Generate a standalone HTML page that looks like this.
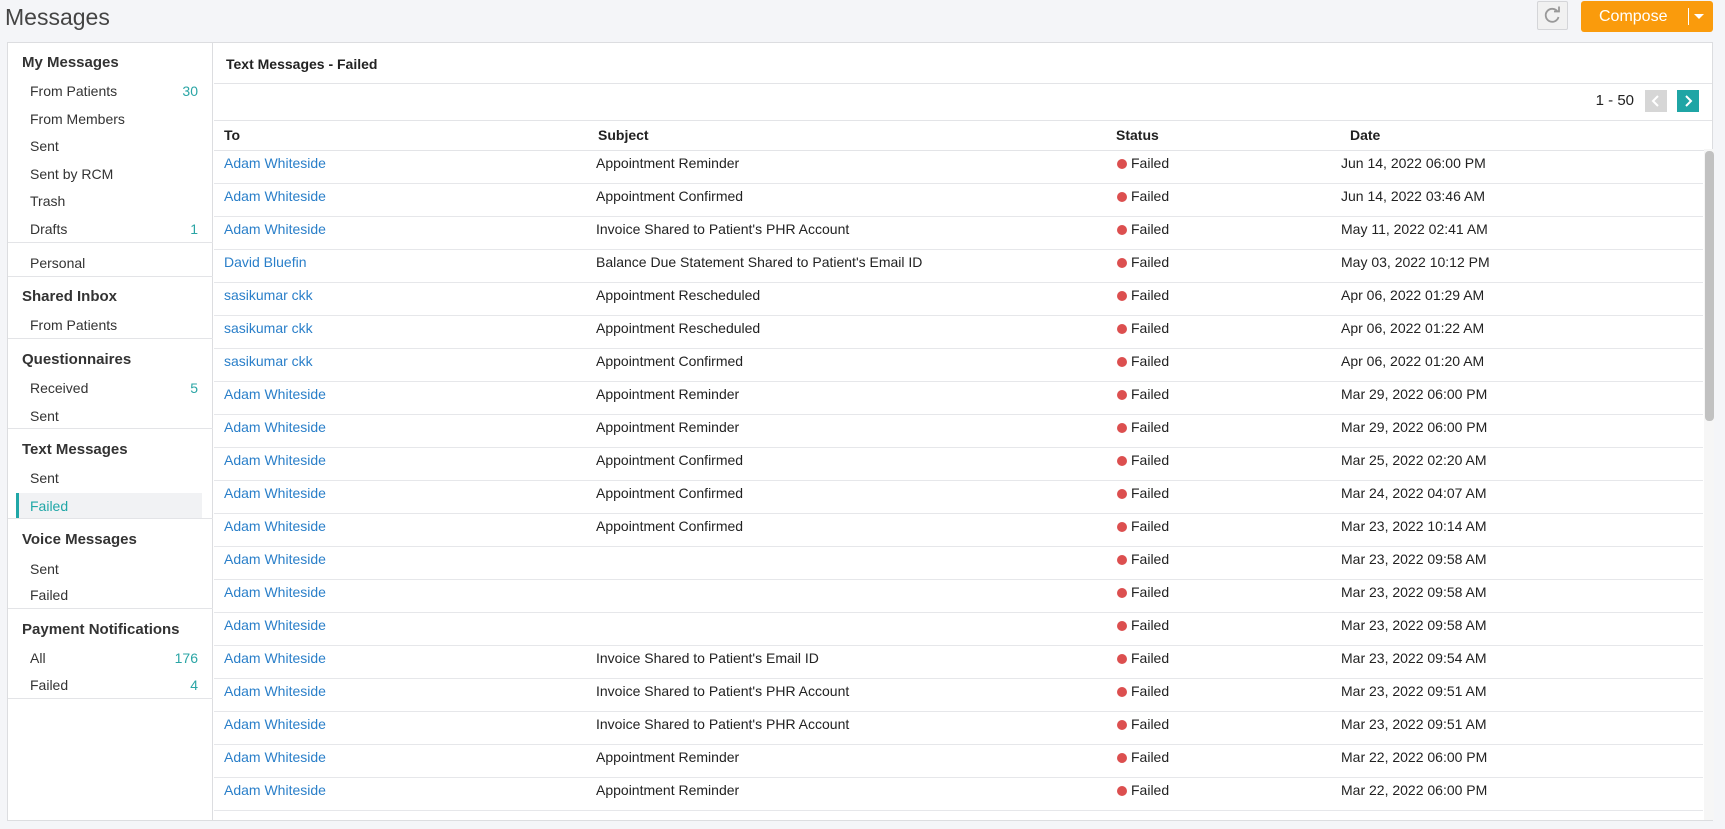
<!DOCTYPE html>
<html><head><meta charset="utf-8"><style>
*{margin:0;padding:0;box-sizing:border-box}
body{width:1725px;height:829px;background:#f4f5f8;font-family:"Liberation Sans",sans-serif;color:#222;position:relative;overflow:hidden;font-size:14px}
.a{position:absolute;white-space:nowrap}
.title{left:5px;top:3px;font-size:23px;color:#444;line-height:28px}
.panel{position:absolute;left:7px;top:42px;width:1706px;height:779px;background:#fff;border:1px solid #dcdde0}
.side{position:absolute;left:0;top:0;width:205px;height:777px;border-right:1px solid #dcdde0}
.h{font-weight:bold;font-size:15px;color:#333;left:14px}
.i{left:22px;color:#333}
.c{right:14px;color:#2aa5a5}
.d{position:absolute;left:0;width:205px;height:1px;background:#e3e4e7}
.sel{position:absolute;left:8px;top:450px;width:186px;height:26px;background:#f1f2f4;border-left:3px solid #20a7a7}
.hl{position:absolute;left:206px;right:0;height:1px;background:#e3e4e7}
.row{position:absolute;left:206px;width:1489px;height:33px;border-bottom:1px solid #e6e7ea}
.row span{position:absolute;top:0;line-height:25px;white-space:nowrap}
.to{left:10px;color:#2a7fc9}
.sub{left:382px}
.dot{left:903px;top:8px!important;width:10px;height:10px;border-radius:50%;background:#dc4f4f}
.st{left:917px}
.dt{left:1127px}
</style></head><body>
<div class="a title">Messages</div>
<div class="a" style="left:1537px;top:1px;width:31px;height:29px;border:1px solid #d4d5d8;border-radius:2px;background:#f1f1f1"><svg width="29" height="27" viewBox="0 0 29 27"><path d="M19.5 9.5 A6.5 6.5 0 1 0 20.5 15" fill="none" stroke="#999" stroke-width="1.8"/><path d="M16 9.5 L21 9.5 L21 4.5" fill="none" stroke="#999" stroke-width="1.8"/></svg></div>
<div class="a" style="left:1581px;top:1px;width:132px;height:31px;background:#fa9b0c;border-radius:3px;color:#fff;font-size:16px;line-height:31px"><span style="position:absolute;left:18px">Compose</span><span style="position:absolute;left:107px;top:7px;width:1px;height:17px;background:#fff"></span><span style="position:absolute;left:113px;top:13px;border-left:5px solid transparent;border-right:5px solid transparent;border-top:5px solid #fff"></span></div>
<div class="panel">
<div class="side">
<div class="a h" style="top:10px;line-height:20px">My Messages</div>
<div class="a i" style="top:38px;line-height:20px">From Patients</div><div class="a c" style="top:38px;line-height:20px">30</div>
<div class="a i" style="top:66px;line-height:20px">From Members</div>
<div class="a i" style="top:93px;line-height:20px">Sent</div>
<div class="a i" style="top:121px;line-height:20px">Sent by RCM</div>
<div class="a i" style="top:148px;line-height:20px">Trash</div>
<div class="a i" style="top:176px;line-height:20px">Drafts</div><div class="a c" style="top:176px;line-height:20px">1</div>
<div class="d" style="top:199px"></div>
<div class="a i" style="top:210px;line-height:20px">Personal</div>
<div class="d" style="top:233px"></div>
<div class="a h" style="top:244px;line-height:20px">Shared Inbox</div>
<div class="a i" style="top:272px;line-height:20px">From Patients</div>
<div class="d" style="top:295px"></div>
<div class="a h" style="top:307px;line-height:20px">Questionnaires</div>
<div class="a i" style="top:335px;line-height:20px">Received</div><div class="a c" style="top:335px;line-height:20px">5</div>
<div class="a i" style="top:363px;line-height:20px">Sent</div>
<div class="d" style="top:385px"></div>
<div class="a h" style="top:397px;line-height:20px">Text Messages</div>
<div class="a i" style="top:425px;line-height:20px">Sent</div>
<div class="sel"></div>
<div class="a i" style="top:453px;line-height:20px;color:#20a7a7">Failed</div>
<div class="d" style="top:475px"></div>
<div class="a h" style="top:487px;line-height:20px">Voice Messages</div>
<div class="a i" style="top:516px;line-height:20px">Sent</div>
<div class="a i" style="top:542px;line-height:20px">Failed</div>
<div class="d" style="top:565px"></div>
<div class="a h" style="top:577px;line-height:20px">Payment Notifications</div>
<div class="a i" style="top:605px;line-height:20px">All</div><div class="a c" style="top:605px;line-height:20px">176</div>
<div class="a i" style="top:632px;line-height:20px">Failed</div><div class="a c" style="top:632px;line-height:20px">4</div>
<div class="d" style="top:655px"></div>
</div>
<div class="a" style="left:218px;top:11px;line-height:20px;font-weight:bold;font-size:14px">Text Messages - Failed</div>
<div class="hl" style="top:40px"></div>
<div class="a" style="right:78px;top:48px;line-height:20px;font-size:15px">1 - 50</div>
<div class="a" style="left:1637px;top:47px;width:22px;height:22px;background:#d6d6d6"><svg width="22" height="22"><path d="M13 6 L8 11 L13 16" fill="none" stroke="#fff" stroke-width="2"/></svg></div>
<div class="a" style="left:1669px;top:47px;width:22px;height:22px;background:#1fa5a5"><svg width="22" height="22"><path d="M9 6 L14 11 L9 16" fill="none" stroke="#fff" stroke-width="2"/></svg></div>
<div class="hl" style="top:77px"></div>
<div class="a" style="left:216px;top:82px;line-height:20px;font-weight:bold">To</div>
<div class="a" style="left:590px;top:82px;line-height:20px;font-weight:bold">Subject</div>
<div class="a" style="left:1108px;top:82px;line-height:20px;font-weight:bold">Status</div>
<div class="a" style="left:1342px;top:82px;line-height:20px;font-weight:bold">Date</div>
<div class="hl" style="top:107px"></div>
<div id="rows"></div>
<div class="a" style="left:1696px;top:106px;width:10px;height:671px;background:#f6f6f6"></div>
<div class="a" style="left:1697px;top:108px;width:9px;height:270px;background:#c1c1c1;border-radius:4px"></div>
</div>
<script>
var d=[["Adam Whiteside","Appointment Reminder","Jun 14, 2022 06:00 PM"],["Adam Whiteside","Appointment Confirmed","Jun 14, 2022 03:46 AM"],["Adam Whiteside","Invoice Shared to Patient's PHR Account","May 11, 2022 02:41 AM"],["David Bluefin","Balance Due Statement Shared to Patient's Email ID","May 03, 2022 10:12 PM"],["sasikumar ckk","Appointment Rescheduled","Apr 06, 2022 01:29 AM"],["sasikumar ckk","Appointment Rescheduled","Apr 06, 2022 01:22 AM"],["sasikumar ckk","Appointment Confirmed","Apr 06, 2022 01:20 AM"],["Adam Whiteside","Appointment Reminder","Mar 29, 2022 06:00 PM"],["Adam Whiteside","Appointment Reminder","Mar 29, 2022 06:00 PM"],["Adam Whiteside","Appointment Confirmed","Mar 25, 2022 02:20 AM"],["Adam Whiteside","Appointment Confirmed","Mar 24, 2022 04:07 AM"],["Adam Whiteside","Appointment Confirmed","Mar 23, 2022 10:14 AM"],["Adam Whiteside","","Mar 23, 2022 09:58 AM"],["Adam Whiteside","","Mar 23, 2022 09:58 AM"],["Adam Whiteside","","Mar 23, 2022 09:58 AM"],["Adam Whiteside","Invoice Shared to Patient's Email ID","Mar 23, 2022 09:54 AM"],["Adam Whiteside","Invoice Shared to Patient's PHR Account","Mar 23, 2022 09:51 AM"],["Adam Whiteside","Invoice Shared to Patient's PHR Account","Mar 23, 2022 09:51 AM"],["Adam Whiteside","Appointment Reminder","Mar 22, 2022 06:00 PM"],["Adam Whiteside","Appointment Reminder","Mar 22, 2022 06:00 PM"]];
var h="";d.forEach(function(r,i){h+='<div class="row" style="top:'+(108+i*33)+'px"><span class="to">'+r[0]+'</span><span class="sub">'+r[1]+'</span><span class="dot"></span><span class="st">Failed</span><span class="dt">'+r[2]+'</span></div>'});
document.getElementById("rows").innerHTML=h;
</script>
</body></html>
